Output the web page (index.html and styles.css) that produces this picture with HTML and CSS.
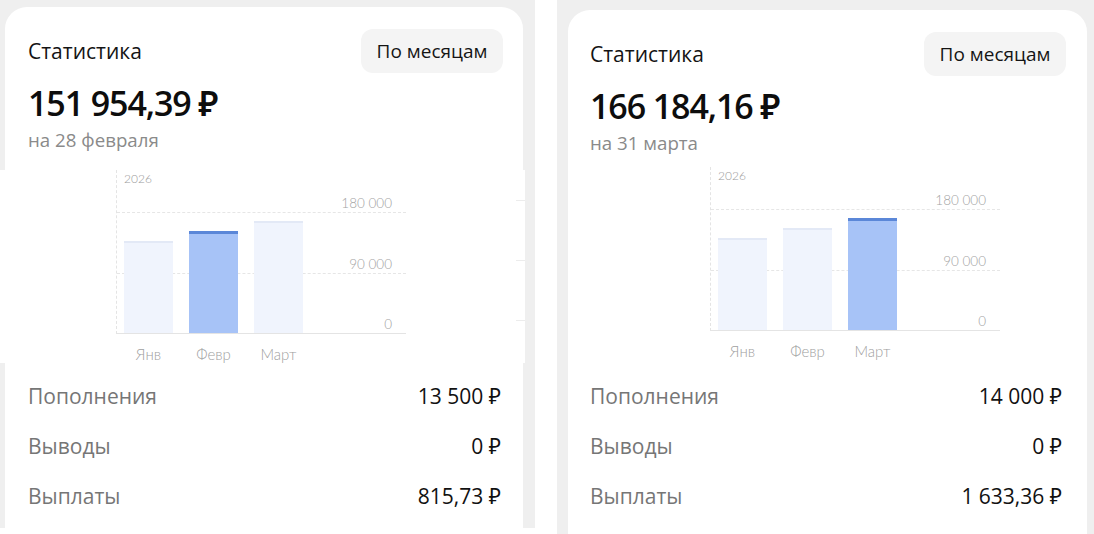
FILE: index.html
```html
<!DOCTYPE html>
<html lang="ru">
<head>
<meta charset="utf-8">
<title>Статистика</title>
<link rel="stylesheet" href="styles.css">
</head>
<body>
<main class="page">
  <section class="shot shot--left">
    <div class="card">
      <div class="card-head">
        <h2 class="title">Статистика</h2>
        <button class="seg">По месяцам</button>
      </div>
      <div class="total">151 954,39 ₽</div>
      <div class="date">на 28 февраля</div>
      <div class="band">
        <div class="chart">
          <div class="plot">
            <span class="year">2026</span>
            <div class="grid grid--top"><span class="grid-label">180 000</span></div>
            <div class="grid grid--mid"><span class="grid-label">90 000</span></div>
            <span class="zero">0</span>
            <div class="bars">
              <div class="bar" style="height:92px"></div>
              <div class="bar bar--active" style="height:102px"></div>
              <div class="bar" style="height:112px"></div>
            </div>
          </div>
          <div class="months"><span>Янв</span><span>Февр</span><span>Март</span></div>
        </div>
        <div class="ghost"><i></i><i></i><i></i></div>
      </div>
      <div class="rows">
        <div class="row"><span class="row-label">Пополнения</span><span class="row-value">13 500 ₽</span></div>
        <div class="row"><span class="row-label">Выводы</span><span class="row-value">0 ₽</span></div>
        <div class="row"><span class="row-label">Выплаты</span><span class="row-value">815,73 ₽</span></div>
      </div>
    </div>
  </section>

  <section class="shot shot--right">
    <div class="card">
      <div class="card-head">
        <h2 class="title">Статистика</h2>
        <button class="seg">По месяцам</button>
      </div>
      <div class="total">166 184,16 ₽</div>
      <div class="date">на 31 марта</div>
      <div class="band">
        <div class="chart">
          <div class="plot">
            <span class="year">2026</span>
            <div class="grid grid--top"><span class="grid-label">180 000</span></div>
            <div class="grid grid--mid"><span class="grid-label">90 000</span></div>
            <span class="zero">0</span>
            <div class="bars">
              <div class="bar" style="height:92px"></div>
              <div class="bar" style="height:102px"></div>
              <div class="bar bar--active" style="height:112px"></div>
            </div>
          </div>
          <div class="months"><span>Янв</span><span>Февр</span><span>Март</span></div>
        </div>
      </div>
      <div class="rows">
        <div class="row"><span class="row-label">Пополнения</span><span class="row-value">14 000 ₽</span></div>
        <div class="row"><span class="row-label">Выводы</span><span class="row-value">0 ₽</span></div>
        <div class="row"><span class="row-label">Выплаты</span><span class="row-value">1 633,36 ₽</span></div>
      </div>
    </div>
  </section>
</main>
</body>
</html>
```

FILE: styles.css
```css
* { box-sizing: border-box; }

html, body {
  margin: 0;
  background: #ffffff;
}

body {
  font-family: "Open Sans", "Noto Sans", "DejaVu Sans", sans-serif;
  color: #111111;
}

.page {
  display: flex;
  align-items: flex-start;
  gap: 22px;
  width: 1094px;
  height: 534px;
  overflow: hidden;
}

.shot {
  background: #efefef;
  overflow: hidden;
  flex: none;
}

.shot--left {
  width: 535px;
  height: 528px;
  padding: 7px 12px 0 5px;
}

.shot--right {
  width: 537px;
  height: 534px;
  padding: 10px 7px 0 11px;
}

.card {
  background: #ffffff;
  border-radius: 22px 22px 0 0;
  height: 100%;
  padding: 22px 20px 0 23px;
}

.shot--right .card {
  padding: 22px 21px 0 22px;
}

.card-head {
  display: flex;
  align-items: center;
  justify-content: space-between;
  height: 44px;
}

.title {
  margin: 0;
  font-size: 21px;
  font-weight: 400;
  line-height: 28px;
  color: #141414;
}

.seg {
  height: 44px;
  width: 142px;
  border: 0;
  border-radius: 12px;
  background: #f4f4f4;
  font-family: inherit;
  font-size: 19px;
  color: #141414;
  padding: 0;
}

.total {
  margin-top: 10px;
  font-size: 34px;
  font-weight: 600;
  line-height: 40px;
  letter-spacing: -1.1px;
  color: #0d0d0d;
}

.date {
  margin-top: 5px;
  font-size: 18.7px;
  line-height: 24px;
  color: #8a8a8a;
}

/* chart */
.band {
  position: relative;
  background: #ffffff;
  margin: 18px -22px 0 -28px;
  padding-left: 116px;
}

.shot--right .band {
  margin: 12px 0 0 0;
  padding-left: 120px;
}

.chart {
  width: 290px;
  font-family: "Lato", "Open Sans", sans-serif;
  font-weight: 300;
  color: #a3a3a3;
}

.plot {
  position: relative;
  height: 164px;
  border-left: 1px dashed #e4e4e4;
  border-bottom: 1px solid #e4e4e4;
}

.year {
  position: absolute;
  top: 2px;
  left: 7px;
  font-size: 12px;
  line-height: 13px;
  font-weight: 300;
  color: #9a9a9a;
}

.grid {
  position: absolute;
  left: 0;
  right: 0;
  height: 0;
  border-top: 1px dashed #e6e6e6;
}

.grid--top { top: 42px; }
.grid--mid { top: 103px; }

.grid-label,
.zero {
  position: absolute;
  right: 14px;
  font-size: 13.5px;
  line-height: 16px;
}

.grid-label { bottom: 2px; }
.zero { bottom: 1px; }

.bars {
  position: absolute;
  left: 0;
  right: 0;
  bottom: 0;
  height: 100%;
  display: flex;
  align-items: flex-end;
  gap: 16px;
  padding-left: 7px;
}

.bar {
  width: 49px;
  background: #f0f4fd;
  border-top: 2px solid #e3e9f6;
}

.bar--active {
  background: #a7c3f7;
  border-top: 3px solid #5b87d8;
}

.months {
  display: flex;
  gap: 16px;
  padding-left: 8px;
  margin-top: 12px;
  font-size: 15px;
  line-height: 17px;
  color: #a0a0a0;
}

.months span {
  width: 49px;
  text-align: center;
}

.ghost {
  position: absolute;
  right: 0;
  top: 30px;
  width: 9px;
  display: flex;
  flex-direction: column;
  gap: 59px;
}

.ghost i {
  display: block;
  height: 1px;
  background: #ececec;
}

/* rows */
.rows {
  margin-top: 8px;
  padding-right: 2px;
}

.shot--right .rows {
  margin-top: 11px;
  padding-right: 4px;
}

.row {
  display: flex;
  align-items: center;
  justify-content: space-between;
  height: 50px;
  font-size: 21px;
  line-height: 28px;
}

.row-label {
  color: #767676;
}

.row-value {
  color: #111111;
}
```
